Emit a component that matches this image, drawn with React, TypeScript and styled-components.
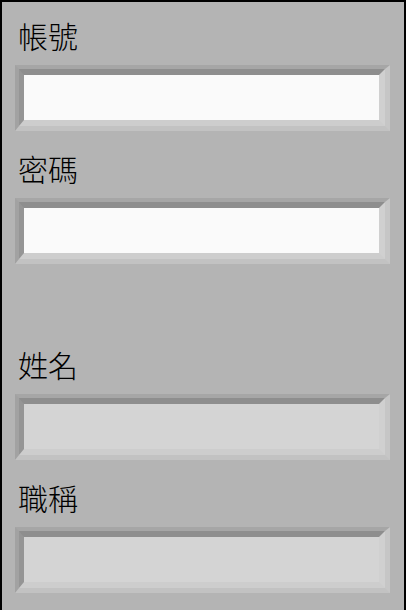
import styled, { createGlobalStyle } from 'styled-components'

const GlobalStyle = createGlobalStyle`
  html, body {
    margin: 0;
    padding: 0;
    background: #b4b4b4;
  }
  * {
    box-sizing: border-box;
  }
`

const Frame = styled.div`
  width: 406px;
  height: 610px;
  background: #b4b4b4;
  border: 2px solid #000;
  border-bottom: none;
  padding: 13px 14px 0 13px;
  display: flex;
  flex-direction: column;
  font-family: 'Noto Sans CJK TC', 'Noto Sans', sans-serif;
`

const Field = styled.div`
  display: flex;
  flex-direction: column;
  height: 134px;
`

const Label = styled.label`
  height: 40px;
  margin-bottom: 10px;
  padding-left: 3px;
  line-height: 40px;
  font-size: 30px;
  font-weight: 300;
  color: #000;
`

const Bevel = styled.div`
  height: 66px;
  border-style: solid;
  border-width: 4px 5px 5px 4px;
  border-color: #a6a6a6 #c6c6c6 #c2c2c2 #a2a2a2;
`

const Input = styled.input<{ $disabled?: boolean }>`
  display: block;
  width: 100%;
  height: 100%;
  margin: 0;
  padding: 0 6px;
  outline: none;
  font-size: 20px;
  font-family: inherit;
  border-style: solid;
  border-width: 6px 6px 6px 5px;
  border-color: #8e8e8e #d0d0d0 #cdcdcd #959595;
  background: ${(p) => (p.$disabled ? '#d4d4d4' : '#fafafa')};
`

const Spacer = styled.div`
  height: 64px;
`

function App() {
  return (
    <Frame>
      <GlobalStyle />
      <Field>
        <Label>帳號</Label>
        <Bevel>
          <Input type="text" />
        </Bevel>
      </Field>
      <Field>
        <Label>密碼</Label>
        <Bevel>
          <Input type="password" />
        </Bevel>
      </Field>
      <Spacer />
      <Field>
        <Label>姓名</Label>
        <Bevel>
          <Input type="text" disabled $disabled />
        </Bevel>
      </Field>
      <Field>
        <Label>職稱</Label>
        <Bevel>
          <Input type="text" disabled $disabled />
        </Bevel>
      </Field>
    </Frame>
  )
}

export default App
